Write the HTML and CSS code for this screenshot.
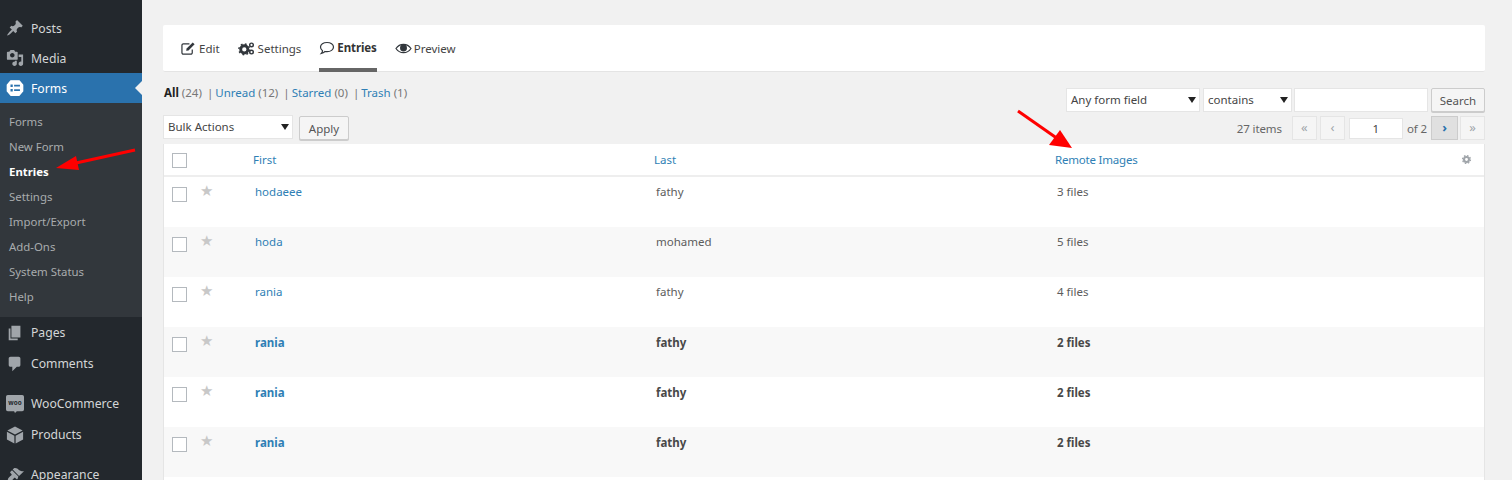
FILE: index.html
```html
<!DOCTYPE html>
<html lang="en">
<head>
<meta charset="utf-8">
<title>Entries</title>
<link rel="stylesheet" href="styles.css">
</head>
<body>
<div class="app">
  <nav class="sidebar">
    <a class="item"><svg class="mi" viewBox="0 0 20 20"><path d="M10.440 3.020l1.820-1.820 6.360 6.350-1.830 1.820c-1.050-.68-2.480-.57-3.410.36l-.75.75c-.92.93-1.040 2.350-.35 3.410l-1.830 1.820-2.410-2.410-2.800 2.790c-.42.42-3.380 2.710-3.800 2.290s1.860-3.390 2.280-3.810l2.790-2.790L4.100 9.360l1.830-1.820c1.050.69 2.480.57 3.400-.36l.75-.75c.93-.92 1.050-2.350.36-3.410z"/></svg><span>Posts</span></a>
    <a class="item"><svg class="mi" viewBox="0 0 20 20"><path fill-rule="evenodd" d="M13 11V4c0-.55-.45-1-1-1h-1.670L9 1H5L3.670 3H2c-.55 0-1 .45-1 1v7c0 .55.45 1 1 1h10c.55 0 1-.45 1-1zM7 4.500c1.380 0 2.500 1.120 2.500 2.500S8.380 9.500 7 9.500 4.500 8.380 4.500 7 5.620 4.500 7 4.500zM14 6h5v10.500c0 1.380-1.120 2.500-2.500 2.500S14 17.880 14 16.500s1.120-2.500 2.500-2.500c.17 0 .34.020.5.050V9h-3V6zm-4 8.050V13h2v3.500c0 1.380-1.120 2.500-2.500 2.500S7 17.880 7 16.500 8.120 14 9.500 14c.17 0 .34.020.5.050z"/></svg><span>Media</span></a>
    <a class="item active"><svg class="mi" viewBox="0 0 20 20"><path d="M5.500 2h9l4 4.500v7l-4 4.500h-9l-4-4.500v-7z" fill="#fff" stroke="#fff" stroke-width="1.500" stroke-linejoin="round"/><path d="M5 6h2.500v2.800H5zM9 6.500h6.500V8.300H9zM5 11h2.500v2.800H5zM9 11.500h6.500v1.800H9z" fill="#2a72ad"/></svg><span>Forms</span></a>
    <ul class="sub">
      <li>Forms</li>
      <li>New Form</li>
      <li class="current">Entries</li>
      <li>Settings</li>
      <li>Import/Export</li>
      <li>Add-Ons</li>
      <li>System Status</li>
      <li>Help</li>
    </ul>
    <a class="item"><svg class="mi" viewBox="0 0 20 20"><path d="M6 15V2h10v13H6zm-1 1h8v2H3V5h2v11z"/></svg><span>Pages</span></a>
    <a class="item"><svg class="mi" viewBox="0 0 20 20"><path d="M5 2h9c1.100 0 2 .9 2 2v7c0 1.100-.9 2-2 2h-2l-5 5v-5H5c-1.100 0-2-.9-2-2V4c0-1.100.9-2 2-2z"/></svg><span>Comments</span></a>
    <a class="item group"><svg class="mi" viewBox="0 0 20 20"><path d="M2 0h16a2 2 0 0 1 2 2v14a2 2 0 0 1-2 2h-6l-2 2-1-2H2a2 2 0 0 1-2-2V2a2 2 0 0 1 2-2z"/><text x="10" y="11.500" class="woo">woo</text></svg><span>WooCommerce</span></a>
    <a class="item"><svg class="mi" viewBox="0 0 20 20"><path d="M10 .5l8.500 4.500L10 9.500 1.500 5zM1 6.500l8.300 4.400V19.500L1 15zM19 6.500V15l-8.300 4.500v-8.600z"/></svg><span>Products</span></a>
    <a class="item group"><svg class="mi" viewBox="0 0 20 20"><path d="M14.480 11.060L7.410 3.990l1.500-1.500c.5-.56 2.300-.47 3.510.32 1.210.8 1.430 1.280 2.910 2.100 1.180.64 2.450 1.260 4.670.85zm-.71.710L6.700 4.700 4.930 6.470c-.39.39-.39 1.020 0 1.410l1.060 1.060c.39.39.39 1.030 0 1.420-.6.600-1.430 1.150-2.210 1.930-2.220 2.220-1.930 3.460-1.080 4.310.86.850 2.090 1.140 4.310-1.080.78-.78 1.330-1.610 1.930-2.210.39-.39 1.030-.39 1.420 0l1.060 1.060c.39.39 1.020.39 1.410 0z"/></svg><span>Appearance</span></a>
  </nav>

  <main class="content">
    <div class="tabs">
      <a class="tab"><svg class="ti" viewBox="0 0 16 16"><path d="M12 9v3.500A1.500 1.500 0 0 1 10.500 14h-8A1.500 1.500 0 0 1 1 12.500v-8A1.500 1.500 0 0 1 2.500 3H9" fill="none" stroke="#32373c" stroke-width="1.300"/><path d="M6 8l6.500-6.500 2 2L8 10l-2.500.5z" fill="#32373c"/></svg>Edit</a>
      <a class="tab"><svg class="ti gear" viewBox="0 0 20 16"><circle cx="7" cy="9" r="4" fill="none" stroke="#32373c" stroke-width="3.200"/><circle cx="7" cy="9" r="6" fill="none" stroke="#32373c" stroke-width="1.600" stroke-dasharray="2 2.700"/><circle cx="15" cy="4" r="2" fill="none" stroke="#32373c" stroke-width="1.600"/><circle cx="15" cy="12" r="2" fill="none" stroke="#32373c" stroke-width="1.600"/></svg>Settings</a>
      <a class="tab on"><svg class="ti bubble" viewBox="0 0 16 16"><path d="M8 2.500c3.700 0 6.500 2 6.500 4.600S11.700 11.700 8 11.700c-.7 0-1.300 0-2-.2-1 1-2.300 1.700-3.700 2 .7-.8 1.200-1.700 1.200-2.800C2.300 9.900 1.500 8.600 1.500 7.100c0-2.600 2.800-4.600 6.500-4.600z" fill="none" stroke="#32373c" stroke-width="1.200"/></svg>Entries</a>
      <a class="tab"><svg class="ti eye" viewBox="0 0 18 16"><path d="M1 8c2-3 4.800-4.500 8-4.500S15 5 17 8c-2 3-4.800 4.500-8 4.500S3 11 1 8z" fill="none" stroke="#32373c" stroke-width="1.300"/><circle cx="9" cy="7.500" r="3.700" fill="#32373c"/></svg>Preview</a>
    </div>

    <div class="toolbar">
      <div class="left">
        <p class="filters"><b>All</b> <i>(24)</i> <s>|</s> <a>Unread</a> <i>(12)</i> <s>|</s> <a>Starred</a> <i>(0)</i> <s>|</s> <a>Trash</a> <i>(1)</i></p>
        <div class="bulk">
          <div class="select s-bulk">Bulk Actions</div>
          <button class="btn apply">Apply</button>
        </div>
      </div>
      <div class="right">
        <div class="search">
          <div class="select s-field">Any form field</div>
          <div class="select s-op">contains</div>
          <div class="input s-text"></div>
          <button class="btn srch">Search</button>
        </div>
        <div class="pager">
          <span class="count">27 items</span>
          <span class="pg first">«</span>
          <span class="pg">‹</span>
          <span class="input s-page">1</span>
          <span class="of">of 2</span>
          <span class="pg next">›</span>
          <span class="pg last">»</span>
        </div>
      </div>
    </div>

    <table class="entries">
      <thead>
        <tr><th class="c-check"><span class="box"></span></th><th class="c-star"></th><th class="c-first"><a>First</a></th><th class="c-last"><a>Last</a></th><th class="c-files"><a>Remote Images</a></th><th class="c-gear"><svg class="cog" viewBox="0 0 16 16"><circle cx="8" cy="8" r="3.600" fill="none" stroke="#a0a5aa" stroke-width="3"/><circle cx="8" cy="8" r="5.700" fill="none" stroke="#a0a5aa" stroke-width="2" stroke-dasharray="2.300 2.170"/></svg></th></tr>
      </thead>
      <tbody>
        <tr><td><span class="box"></span></td><td class="star">★</td><td class="name"><a>hodaeee</a></td><td class="val">fathy</td><td class="val">3 files</td><td></td></tr>
        <tr class="alt"><td><span class="box"></span></td><td class="star">★</td><td class="name"><a>hoda</a></td><td class="val">mohamed</td><td class="val">5 files</td><td></td></tr>
        <tr><td><span class="box"></span></td><td class="star">★</td><td class="name"><a>rania</a></td><td class="val">fathy</td><td class="val">4 files</td><td></td></tr>
        <tr class="alt unread"><td><span class="box"></span></td><td class="star">★</td><td class="name"><a>rania</a></td><td class="val">fathy</td><td class="val">2 files</td><td></td></tr>
        <tr class="unread"><td><span class="box"></span></td><td class="star">★</td><td class="name"><a>rania</a></td><td class="val">fathy</td><td class="val">2 files</td><td></td></tr>
        <tr class="alt unread"><td><span class="box"></span></td><td class="star">★</td><td class="name"><a>rania</a></td><td class="val">fathy</td><td class="val">2 files</td><td></td></tr>
        <tr><td colspan="6"></td></tr>
      </tbody>
    </table>
  </main>
</div>

<svg class="arrow arrow-left" viewBox="0 0 80 24"><path d="M79 2L20 15" stroke="#f00" stroke-width="3" fill="none"/><path d="M0 20L20 8l3 14z" fill="#f00"/></svg>
<svg class="arrow arrow-right" viewBox="0 0 60 44"><path d="M2 2l40 28" stroke="#f00" stroke-width="3" fill="none"/><path d="M56 39L33 36l11-15z" fill="#f00"/></svg>
</body>
</html>
```

FILE: styles.css
```css
* { box-sizing: border-box; }
html, body { margin: 0; height: 480px; overflow: hidden; }
body { background: #f1f1f1; font-family: "Noto Sans", "Open Sans", sans-serif; font-size: 12px; color: #555; position: relative; }
a { color: #2f7fb5; text-decoration: none; }

.app { display: flex; height: 480px; overflow: hidden; }

.sidebar { flex: 0 0 142px; background: #23282d; padding-top: 13px; color: #d6d8d9; overflow: hidden; }
.item { display: flex; align-items: center; height: 31px; padding-left: 6px; font-size: 12.200px; color: #d4d6d7; position: relative; }
.item:nth-child(-n+3) { height: 30px; }
.item span { margin-left: 7px; }
.item.active span { padding-top: 1px; }
.mi { width: 18px; height: 18px; fill: #a0a5aa; flex: none; }
.woo { font-size: 7px; font-weight: 700; fill: #23282d; text-anchor: middle; font-family: "Noto Sans", sans-serif; }
.item.active { background: #2a72ad; color: #fff; }
.item.active::after { content: ""; position: absolute; right: 0; top: 8px; border: 7px solid transparent; border-right-color: #f1f1f1; border-left-width: 0; }
.item.group { margin-top: 9px; }
.sub { list-style: none; margin: 0; padding: 6px 0 8px; background: #32373c; }
.sub li { height: 25px; line-height: 25px; padding-left: 9px; font-size: 11.400px; color: #a9acae; }
.sub li.current { color: #fff; font-weight: 700; }

.content { flex: 1; padding: 25px 27px 0 21px; min-width: 0; }

.tabs { display: flex; background: #fff; height: 47px; padding-left: 18px; gap: 18px; border-bottom: 1px solid #e4e4e4; border-radius: 2px; }
.tab { display: flex; align-items: center; height: 47px; color: #444; font-size: 11.500px; padding-bottom: 1px; }
.tab.on { font-weight: 700; color: #333; border-bottom: 4px solid #666; padding-top: 3px; letter-spacing: -.1px; }
.ti { width: 15px; height: 15px; margin-right: 3px; flex: none; }
.ti.gear { width: 18px; margin-right: 2px; }
.ti.bubble { width: 16px; height: 16px; margin-right: 2px; }
.ti.eye { width: 17px; margin-right: 2px; }

.toolbar { display: flex; justify-content: space-between; height: 72px; }
.filters { margin: 13px 0 0 1px; font-size: 11.500px; color: #777; line-height: 16px; }
.filters b { color: #222; }
.filters i { font-style: normal; }
.filters s { text-decoration: none; margin: 0 -1px 0 2px; color: #777; }
.bulk { display: flex; gap: 6px; margin-top: 14px; }
.select { position: relative; background: #fff; border: 1px solid #e5e5e5; height: 24px; line-height: 22px; padding-left: 4px; font-size: 11.500px; color: #444; }
.select::after { content: ""; position: absolute; right: 3px; top: 8px; border: 4px solid transparent; border-top: 6px solid #222; border-bottom: 0; }
.s-bulk { width: 130px; }
.btn { font: inherit; font-size: 11.500px; color: #555; background: #f5f5f5; border: 1px solid #ccc; border-radius: 2px; box-shadow: 0 1px 0 #ccc; padding: 0; height: 24px; }
.apply { width: 50px; margin-top: 1px; }

.right { display: flex; flex-direction: column; align-items: flex-end; }
.search { display: flex; margin-top: 16px; }
.s-field { width: 134px; margin-right: 3px; }
.s-op { width: 89px; margin-right: 2px; }
.input { background: #fff; border: 1px solid #e5e5e5; display: block; height: 24px; }
.s-text { width: 134px; margin-right: 3px; }
.srch { width: 54px; }
.pager { display: flex; align-items: center; margin-top: 4px; height: 24px; font-size: 11.500px; color: #666; }
.count { margin-right: 10px; letter-spacing: -.1px; }
.pg { width: 25px; height: 24px; text-align: center; line-height: 20px; font-size: 13px; color: #a0a5aa; background: #f5f5f5; border: 1px solid #e5e5e5; }
.pg.first { margin-right: 3px; }
.pg.next { background: #e0e0e0; border-color: #ccc; color: #2a72ad; font-weight: 700; width: 27px; margin-right: 2px; }
.s-page { width: 54px; height: 21px; line-height: 19px; text-align: center; color: #444; margin: 0 4px; }
.of { margin-right: 4px; letter-spacing: -.1px; }

.entries { width: 100%; border-collapse: separate; border-spacing: 0; table-layout: fixed; background: #fff; font-size: 11.500px; color: #5c5c5c; border-left: 1px solid #e5e5e5; border-right: 1px solid #e5e5e5; }
.entries th { height: 33px; font-weight: 400; text-align: left; border-bottom: 2px solid #eee; padding: 0; }
.entries th.c-check { padding-top: 2px; }
.entries td { height: 50px; padding: 7px 0 0; vertical-align: top; }
.entries td:first-child { padding-top: 10px; }
.entries .alt td { background: #f8f8f8; }
.c-check { width: 36px; }
.c-star { width: 53px; }
.c-first { width: 401px; }
.c-last { width: 401px; }
.c-files a { letter-spacing: -.2px; }
.c-gear { width: 23px; }
.box { display: block; width: 15px; height: 15px; margin-left: 8px; border: 1px solid #b4b9be; background: #fff; }
.entries td.name { padding-left: 2px; }
.entries td.val { padding-left: 2px; }
.unread td { font-weight: 700; color: #484848; }
.entries .unread td.name, .entries .unread td.val { padding-top: 8px; }
.entries td.star, .entries .unread td.star { color: #c8c8c8; font-size: 15px; font-weight: 400; line-height: 14px; padding-top: 6px; }
.cog { display: block; width: 11px; height: 11px; }
.arrow { position: absolute; }
.arrow-left { left: 56px; top: 148px; width: 80px; height: 24px; }
.arrow-right { left: 1016px; top: 109px; width: 60px; height: 44px; }
```
